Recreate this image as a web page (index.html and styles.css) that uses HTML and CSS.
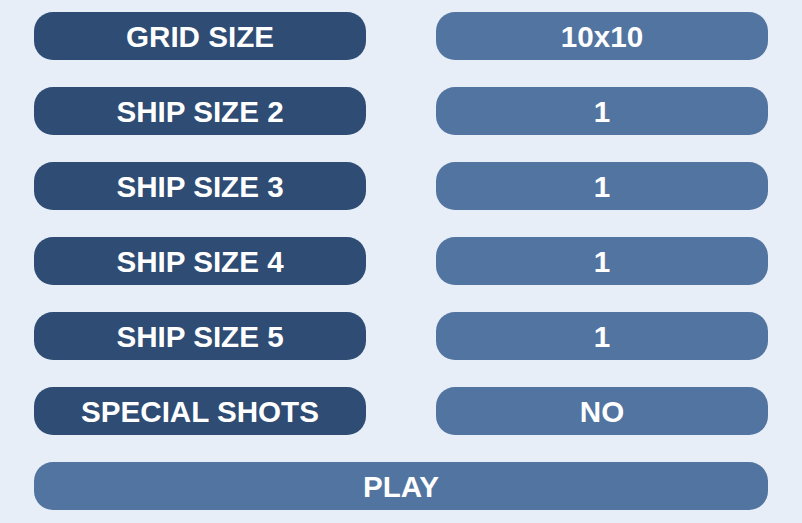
FILE: index.html
```html
<!DOCTYPE html>
<html>
<head>
<meta charset="utf-8">
<link rel="stylesheet" href="styles.css">
</head>
<body>
<div class="menu">
  <div class="btn label">GRID SIZE</div>
  <div class="btn value">10x10</div>
  <div class="btn label">SHIP SIZE 2</div>
  <div class="btn value">1</div>
  <div class="btn label">SHIP SIZE 3</div>
  <div class="btn value">1</div>
  <div class="btn label">SHIP SIZE 4</div>
  <div class="btn value">1</div>
  <div class="btn label">SHIP SIZE 5</div>
  <div class="btn value">1</div>
  <div class="btn label">SPECIAL SHOTS</div>
  <div class="btn value">NO</div>
  <div class="btn value play">PLAY</div>
</div>
</body>
</html>
```
FILE: styles.css
```css
html, body {
  margin: 0;
  padding: 0;
  background: #e7eef7;
}
.menu {
  display: grid;
  grid-template-columns: 332px 332px;
  column-gap: 70px;
  row-gap: 27px;
  padding: 12px 34px;
}
.btn {
  height: 48px;
  border-radius: 19px;
  display: flex;
  align-items: center;
  justify-content: center;
  color: #ffffff;
  font-family: "Liberation Sans", Arial, sans-serif;
  font-weight: bold;
  font-size: 29.6px;
  line-height: 1;
  padding-top: 2px;
  box-sizing: border-box;
}
.label {
  background: #2e4c74;
}
.value {
  background: #5274a0;
}
.play {
  grid-column: 1 / 3;
}
```
